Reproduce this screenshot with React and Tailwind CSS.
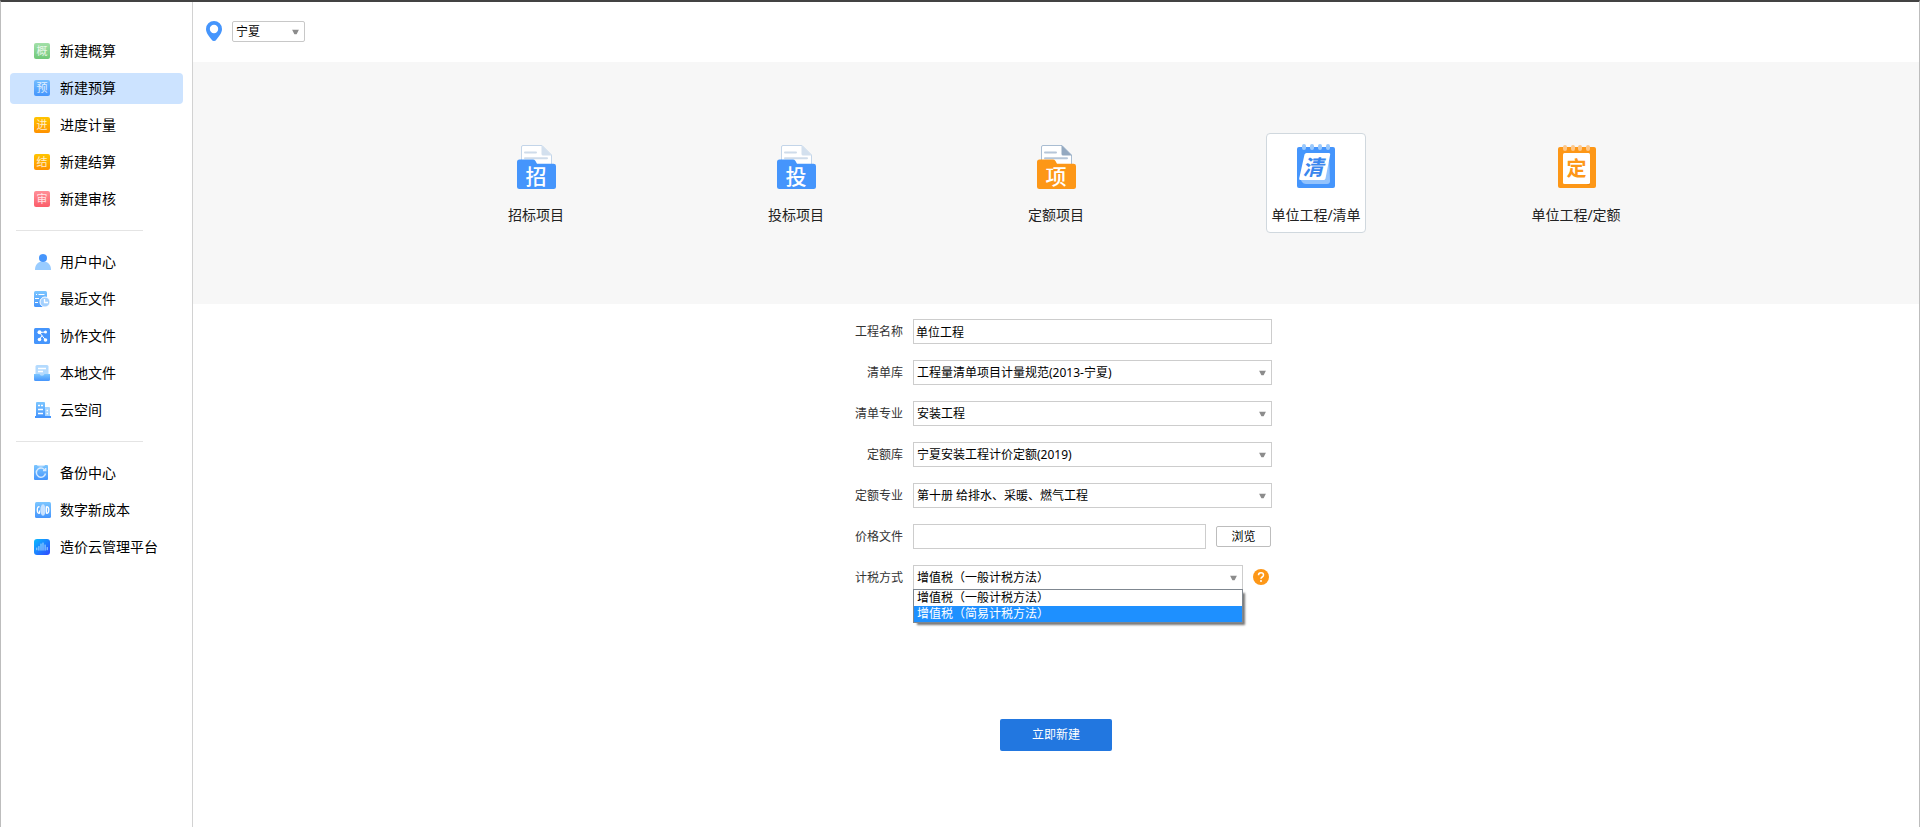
import { useState } from 'react';
import clsx from 'clsx';

function WordBadge({ word, tone }) {
  return (
    <span className={clsx('w-4 h-4 shrink-0 rounded-xs flex items-center justify-center text-[11px] leading-4 text-white/80 bg-linear-to-b', tone)}>
      {word}
    </span>
  );
}

function SmallIcon({ children }) {
  return (
    <svg className="w-4 h-4 shrink-0 overflow-visible" viewBox="0 0 16 16" fill="none" aria-hidden="true">
      <defs>
        <linearGradient id="sky" x1="0" y1="0" x2="0" y2="1">
          <stop offset="0" stopColor="#7cc6ff" />
          <stop offset="1" stopColor="#4595fc" />
        </linearGradient>
        <linearGradient id="deep" x1="0" y1="0" x2="1" y2="1">
          <stop offset="0" stopColor="#08bcff" />
          <stop offset="1" stopColor="#3048ff" />
        </linearGradient>
      </defs>
      {children}
    </svg>
  );
}

const UserIcon = () => (
  <SmallIcon>
    <path d="M1 16C1 10.5 4 7.5 9 7.5S17 10.5 17 16Z" fill="#99ccff" />
    <circle cx="9" cy="4" r="4" fill="#4595fc" />
  </SmallIcon>
);

const RecentIcon = () => (
  <SmallIcon>
    <rect width="13" height="16" rx="1.5" fill="url(#sky)" />
    <path d="M2 3.5h1M4.5 3.5h6M1 7.5h4M1 11.5h3" stroke="#fff" strokeWidth="1.2" />
    <circle cx="11" cy="11" r="5" fill="#a4d0fd" stroke="#fff" />
    <path d="M10.5 8v3.500H14" stroke="#fff" strokeWidth="1.3" />
  </SmallIcon>
);

const ShareIcon = () => (
  <SmallIcon>
    <rect width="16" height="16" rx="1.5" fill="#4595fc" />
    <path d="M5.5 4.5 11.500 12M8 7.500 5.500 11.500M5.500 4.500l6-.5" stroke="#fff" />
    <g fill="#fff">
      <circle cx="5.5" cy="4.3" r="2" />
      <circle cx="11.5" cy="4" r="1.5" />
      <circle cx="5.500" cy="11.5" r="1.8" />
      <circle cx="11.5" cy="12" r="1.8" />
    </g>
  </SmallIcon>
);

const LocalIcon = () => (
  <SmallIcon>
    <rect x="1.5" width="13" height="12" rx="1.5" fill="#b3dafe" />
    <path d="M4 3.500h8M4 6.500h5" stroke="#fff" strokeWidth="1.3" />
    <path d="M0 9h5.500q.5 1.800 2.500 1.800T10.500 9H16v5.500q0 1.500-1.500 1.500h-13Q0 16 0 14.500Z" fill="url(#sky)" />
  </SmallIcon>
);

const BuildingIcon = () => (
  <SmallIcon>
    <rect x="10" y="5" width="6" height="10" rx="1" fill="#a5d4fe" />
    <rect x="2" width="9" height="15" rx="1" fill="url(#sky)" />
    <path d="M1 14h16v2H1Z" fill="#4595fc" />
    <path d="M4 3.500h2M7 3.500h2M4 7.500h5M4 11.500h5M12.500 8.500H14M12.500 11.500H14" stroke="#fff" strokeWidth="1.5" />
  </SmallIcon>
);

const BackupIcon = () => (
  <SmallIcon>
    <rect width="14" height="15" y="0" rx="1" fill="url(#sky)" />
    <path d="M3 0h8v.5q-1 1-4 1T3 .5Z" fill="#d3e9ff" />
    <path d="M11.300 6A4.600 4.600 0 1 0 11.500 8.500M9 5.500h2.700V3" stroke="#d8ebff" strokeWidth="1.4" />
  </SmallIcon>
);

const DigitalIcon = () => (
  <SmallIcon>
    <rect x="1" width="16" height="16" rx="1.5" fill="url(#sky)" />
    <path d="M5.500 4.800Q3.300 4.500 3.300 8t2.200 3.200V8.500" stroke="#fff" strokeWidth="1.3" />
    <path d="M12.500 4.800v6.400Q14.800 11.500 14.800 8T12.500 4.800Z" stroke="#fff" strokeWidth="1.3" />
    <ellipse cx="9" cy="8" rx="2.600" ry="5.800" fill="#d6eaff" />
    <path d="M8 2.500v11M10 2.500v11" stroke="#9dcbfd" strokeWidth=".5" />
  </SmallIcon>
);

const CloudIcon = () => (
  <SmallIcon>
    <rect width="16" height="16" rx="3" fill="url(#deep)" />
    <path d="M2.800 9v1.800M4.900 7.500v3.700M7 5v6.200M9 4v7.200M11.100 6v5.200M13.200 8.500v2.300" stroke="#a9dcff" strokeLinecap="round" />
  </SmallIcon>
);

// 文件夹样式的大图标
function FolderIcon({ word, color, fold, line, edge }) {
  return (
    <svg className="w-11 h-12" viewBox="0 0 44 48" fill="none" aria-hidden="true">
      <path d="M7.500 24V4Q7.500 2.500 9 2.500H28L37.500 12v12" fill="#fff" stroke={edge} />
      <path d="M27.500 2 38 12.500H29Q27.500 12.500 27.500 11Z" fill={fold} />
      <path d="M11 9.500h11M11 15.200h22" stroke={line} strokeWidth="2" strokeLinecap="round" />
      <path d="M3 19q0-2.500 2.500-2.500H19q1.500 0 2.300 1.300l1.700 2.900h16.500Q42 20.700 42 23v20.500Q42 46 39.500 46h-34Q3 46 3 43.500Z" fill={color} />
      <text x="22" y="41" textAnchor="middle" fontSize="21" fontWeight="500" fill="#fff">{word}</text>
    </svg>
  );
}

function ListIcon() {
  return (
    <svg className="w-11 h-12" viewBox="0 0 44 48" fill="none" aria-hidden="true">
      <rect x="3" y="4" width="38" height="41" rx="2" fill="#4595fc" />
      <g fill="#9ac9fd">
        <rect x="8" y="1" width="4" height="6" rx="2" />
        <rect x="16" y="1" width="4" height="6" rx="2" />
        <rect x="24" y="1" width="4" height="6" rx="2" />
        <rect x="32" y="1" width="4" height="6" rx="2" />
      </g>
      <path d="M35 10.500 36 38q0 3-3 3H12q-3 0-5-3.500Z" fill="#93c3fd" />
      <path d="M12.500 10H35q1.500 0 1.200 1.500L31.500 35.500Q31 37 29.500 37H6.500Q5 37 5.200 35.500L10.500 11.500Q11 10 12.500 10Z" fill="#fff" />
      <text x="19" y="32" textAnchor="middle" fontSize="21" fontWeight="700" fontStyle="italic" fill="#3a86ee">清</text>
    </svg>
  );
}

function QuotaIcon() {
  return (
    <svg className="w-11 h-12" viewBox="0 0 44 48" fill="none" aria-hidden="true">
      <rect x="4" y="4" width="38" height="41" rx="2" fill="#fd9717" />
      <g fill="#fdc78a">
        <rect x="9" y="2" width="4" height="6" rx="2" />
        <rect x="17" y="2" width="4" height="6" rx="2" />
        <rect x="24" y="2" width="4" height="6" rx="2" />
        <rect x="32" y="2" width="4" height="6" rx="2" />
      </g>
      <path d="M36 39v2.500h-3Z" fill="#d97a08" />
      <rect x="9" y="10" width="27" height="31" rx="1.5" fill="#fff" />
      <text x="22.5" y="33" textAnchor="middle" fontSize="20" fontWeight="700" fill="#fd9717">定</text>
    </svg>
  );
}

const groups = [
  [
    { name: '新建概算', icon: <WordBadge word="概" tone="from-[#a2e0a8] to-[#6fc878]" /> },
    { name: '新建预算', icon: <WordBadge word="预" tone="from-[#74bdff] to-[#4595fc]" /> },
    { name: '进度计量', icon: <WordBadge word="进" tone="from-[#ffc400] to-[#ff9100]" /> },
    { name: '新建结算', icon: <WordBadge word="结" tone="from-[#ffc400] to-[#ff9100]" /> },
    { name: '新建审核', icon: <WordBadge word="审" tone="from-[#ff8f98] to-[#fb5c69]" /> },
  ],
  [
    { name: '用户中心', icon: <UserIcon /> },
    { name: '最近文件', icon: <RecentIcon /> },
    { name: '协作文件', icon: <ShareIcon /> },
    { name: '本地文件', icon: <LocalIcon /> },
    { name: '云空间', icon: <BuildingIcon /> },
  ],
  [
    { name: '备份中心', icon: <BackupIcon /> },
    { name: '数字新成本', icon: <DigitalIcon /> },
    { name: '造价云管理平台', icon: <CloudIcon /> },
  ],
];

const projectTypes = [
  { name: '招标项目', icon: <FolderIcon word="招" color="#4595fc" fold="#d3e0ee" line="#cfdcea" edge="#c3d5e9" /> },
  { name: '投标项目', icon: <FolderIcon word="投" color="#4595fc" fold="#d3e0ee" line="#cfdcea" edge="#c3d5e9" /> },
  { name: '定额项目', icon: <FolderIcon word="项" color="#fd9717" fold="#94a9c0" line="#b6c6d8" edge="#a9bdd2" /> },
  { name: '单位工程/清单', icon: <ListIcon /> },
  { name: '单位工程/定额', icon: <QuotaIcon /> },
];

const taxModes = ['增值税（一般计税方法）', '增值税（简易计税方法）'];

function Sidebar() {
  const [current, setCurrent] = useState('新建预算');

  return (
    <aside className="w-48 shrink-0 border-r border-[#d2d2d2] pt-[34px]">
      <nav>
        {groups.map((items, i) => (
          <div key={i}>
            {i > 0 && <hr className="ml-[15px] w-[127px] mt-[15px] mb-4 border-[#e4e4e4]" />}
            <ul className="flex flex-col gap-1.5 px-[9px]">
              {items.map((item) => (
                <li key={item.name}>
                  <a
                    href="#"
                    onClick={() => setCurrent(item.name)}
                    className={clsx(
                      'flex items-center gap-2.5 h-[31px] pl-6 pb-px rounded-sm text-sm text-black',
                      current === item.name && 'bg-[#cce3ff]'
                    )}
                  >
                    {item.icon}
                    {item.name}
                  </a>
                </li>
              ))}
            </ul>
          </div>
        ))}
      </nav>
    </aside>
  );
}

function Caret() {
  return (
    <svg className="absolute right-1.5 top-1/2 -translate-y-1/2 w-[7px] h-[5px] pointer-events-none" viewBox="0 0 7 5" aria-hidden="true">
      <path d="M0 0h7L4.500 5h-2Z" fill="#8c8c8c" />
    </svg>
  );
}

function SelectBox({ id, options, children }) {
  return (
    <div className="relative flex-1">
      <select id={id} className="block w-full h-[25px] appearance-none bg-white border border-[#cdcdcd] pl-[3px] pr-4 outline-none text-black">
        {options.map((o) => <option key={o}>{o}</option>)}
      </select>
      <Caret />
      {children}
    </div>
  );
}

function Field({ id, label, children }) {
  return (
    <div className="flex items-center gap-2.5 h-[25px]">
      <label htmlFor={id} className="w-[63px] text-right text-[#333]">{label}</label>
      {children}
    </div>
  );
}

export default function App() {
  const [picked, setPicked] = useState('单位工程/清单');

  return (
    <div className="min-h-screen flex bg-white border-t-2 border-t-[#434343] border-x border-x-[#bdbdbd] font-['Noto_Sans','Noto_Sans_CJK_SC',sans-serif] text-black">
      <Sidebar />

      <main className="flex-1 min-w-0">
        {/* 地区 */}
        <header className="h-[60px] flex items-start gap-2.5 pl-[13px] pt-[19px]">
          <svg className="w-4 h-5" viewBox="0 0 16 20" aria-hidden="true">
            <path d="M8 0a8 8 0 0 1 8 8c0 4-3 7-5.500 10.500Q9.500 20 8 20t-2.500-1.500C3 15 0 12 0 8a8 8 0 0 1 8-8Zm0 3.800a4.200 4.200 0 1 0 0 8.400 4.200 4.200 0 0 0 0-8.400Z" fill="#4595fc" />
          </svg>
          <div className="relative w-[73px]">
            <select aria-label="地区" className="block w-full h-[21px] appearance-none bg-white border border-[#c8c8c8] rounded-xs pl-[3px] text-xs leading-4 outline-none">
              <option>宁夏</option>
            </select>
            <Caret />
          </div>
        </header>

        {/* 工程类型 */}
        <section className="h-[242px] bg-[#f7f7f7] flex items-center justify-center gap-40">
          {projectTypes.map((type) => (
            <button
              key={type.name}
              type="button"
              onClick={() => setPicked(type.name)}
              className={clsx(
                'w-[100px] h-[100px] shrink-0 pt-[9px] flex flex-col items-center gap-3.5 rounded-sm border text-sm text-[#222] whitespace-nowrap',
                picked === type.name ? 'bg-white border-[#d0d8de]' : 'border-transparent'
              )}
            >
              {type.icon}
              {type.name}
            </button>
          ))}
        </section>

        <form className="w-[432px] mx-auto pt-[15px] flex flex-col gap-4 text-xs leading-4" onSubmit={(e) => e.preventDefault()}>
          <Field id="name" label="工程名称">
            <input id="name" defaultValue="单位工程" className="flex-1 h-[25px] border border-[#cdcdcd] px-0.5 outline-none" />
          </Field>
          <Field id="bill" label="清单库">
            <SelectBox id="bill" options={['工程量清单项目计量规范(2013-宁夏)']} />
          </Field>
          <Field id="billMajor" label="清单专业">
            <SelectBox id="billMajor" options={['安装工程']} />
          </Field>
          <Field id="quota" label="定额库">
            <SelectBox id="quota" options={['宁夏安装工程计价定额(2019)']} />
          </Field>
          <Field id="quotaMajor" label="定额专业">
            <SelectBox id="quotaMajor" options={['第十册 给排水、采暖、燃气工程']} />
          </Field>
          <Field id="price" label="价格文件">
            <input id="price" className="flex-1 min-w-0 h-[25px] border border-[#cdcdcd] px-0.5 outline-none" />
            <button type="button" className="w-[55px] h-[21px] mr-px border border-[#bdbdbd] rounded-xs bg-white">浏览</button>
          </Field>
          <Field id="tax" label="计税方式">
            <SelectBox id="tax" options={taxModes}>
              <ul role="listbox" className="absolute left-0 right-0 top-6 z-10 bg-white border border-[#7f8790] shadow-[3px_3px_2px_-1px_#777]">
                {taxModes.map((mode, i) => (
                  <li key={mode} role="option" aria-selected={i === 1} className={clsx('h-4 pl-[3px]', i === 1 && 'bg-[#1e90ff] text-white')}>
                    {mode}
                  </li>
                ))}
              </ul>
            </SelectBox>
            <button type="button" aria-label="计税方式说明" className="self-start mt-1 mr-[3px]">
              <svg className="w-4 h-4" viewBox="0 0 16 16" fill="none" aria-hidden="true">
                <circle cx="8" cy="8" r="8" fill="#fd9717" />
                <path d="M5.500 6.200Q5.500 3.800 8 3.800t2.500 2.200Q10.500 7.200 9.200 8T8 9.800" stroke="#fff" strokeWidth="1.5" />
                <circle cx="8" cy="12" r="1" fill="#fff" />
              </svg>
            </button>
          </Field>
          <button type="submit" className="w-28 h-8 mt-[113px] self-center rounded-xs bg-[#2277e0] text-white">
            立即新建
          </button>
        </form>
      </main>
    </div>
  );
}
